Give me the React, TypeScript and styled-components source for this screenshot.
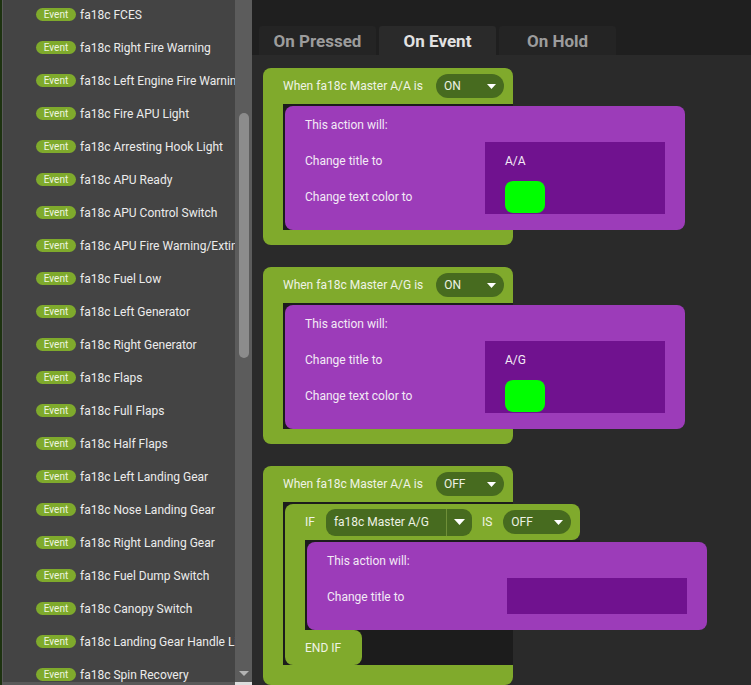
import React from "react";
import styled, { createGlobalStyle } from "styled-components";

const GlobalStyle = createGlobalStyle`
  html, body {
    margin: 0;
    padding: 0;
    background: #2a2a2a;
    overflow: hidden;
  }
  body {
    font-family: Roboto, "Liberation Sans", sans-serif;
  }
`;

const Page = styled.div`
  display: flex;
  height: 685px;
  width: 751px;
  overflow: hidden;
`;

/* ---------- sidebar ---------- */

const Sidebar = styled.aside`
  display: flex;
  width: 252px;
  flex-shrink: 0;
  height: 100%;
  background: #1d3210;
`;

const ListPanel = styled.div`
  display: flex;
  flex-direction: column;
  margin-left: 2px;
  border-left: 1px solid #5a5a5a;
  width: 232px;
  background: #444444;
  overflow: hidden;
`;

const EventList = styled.ul`
  flex: 1;
  list-style: none;
  margin: -2px 0 0 0;
  padding: 0 0 0 33px;
  overflow: hidden;
`;

const EventRow = styled.li`
  display: flex;
  align-items: center;
  gap: 4px;
  height: 33px;
  white-space: nowrap;
  font-size: 12px;
  color: #ececec;
`;

const Badge = styled.span`
  display: inline-flex;
  align-items: center;
  justify-content: center;
  flex-shrink: 0;
  width: 40px;
  height: 13px;
  border-radius: 7px;
  background: #7faa2c;
  color: #eef5e0;
  font-size: 10px;
`;

const HScroll = styled.div`
  height: 3px;
  background: #595959;
`;

const ScrollTrack = styled.div`
  display: flex;
  flex-direction: column;
  align-items: center;
  width: 17px;
  background: #5c5c5c;
  padding-top: 113px;
`;

const ScrollThumb = styled.div`
  width: 10px;
  height: 245px;
  border-radius: 5px;
  background: #8c8c8c;
`;

const ScrollArrow = styled.div`
  margin-top: auto;
  margin-bottom: 6px;
  width: 0;
  height: 0;
  border-left: 5px solid transparent;
  border-right: 5px solid transparent;
  border-top: 5px solid #b4b4b4;
`;

const ScrollCorner = styled.div`
  align-self: stretch;
  height: 3px;
  background: #dedede;
`;

/* ---------- main ---------- */

const Main = styled.main`
  flex: 1;
  display: flex;
  flex-direction: column;
  min-width: 0;
`;

const TabBar = styled.div`
  display: flex;
  gap: 3px;
  height: 55px;
  padding: 26px 0 0 7px;
  box-sizing: border-box;
  background: #1f1f1f;
`;

const Tab = styled.div<{ $active?: boolean }>`
  display: flex;
  align-items: center;
  justify-content: center;
  width: 117px;
  height: 29px;
  border-radius: 3px 3px 0 0;
  background: ${(p) => (p.$active ? "#2a2a2a" : "#242424")};
  color: ${(p) => (p.$active ? "#e2e2e2" : "#9c9c9c")};
  font-size: 17px;
  font-weight: 700;
`;

const Canvas = styled.div`
  flex: 1;
  display: flex;
  flex-direction: column;
  gap: 22px;
  padding: 13px 0 0 11px;
  background: #2a2a2a;
`;

const Block = styled.div`
  width: 250px;
  padding-bottom: 15px;
  border-radius: 8px;
  background: #80aa2c;
  color: #eff3e6;
  font-size: 12px;
`;

const BlockHeader = styled.div`
  display: flex;
  align-items: center;
  gap: 13px;
  height: 36px;
  padding-left: 20px;
  white-space: nowrap;
`;

const Slot = styled.div`
  margin-left: 20px;
  padding: 2px 0 0 2px;
  background: #1c1c1c;
`;

const Select = styled.div<{ $width: number }>`
  display: flex;
  align-items: center;
  justify-content: space-between;
  box-sizing: border-box;
  width: ${(p) => p.$width}px;
  height: 24px;
  padding: 0 8px;
  border-radius: 12px;
  background: #476b1f;
  color: #eef2e4;
  font-size: 12px;
`;

const SplitSelect = styled.div`
  display: flex;
  align-items: stretch;
  width: 146px;
  height: 27px;
  border-radius: 9px;
  background: #476b1f;
  color: #eef2e4;
  font-size: 12px;
  overflow: hidden;
`;

const SplitLabel = styled.div`
  display: flex;
  align-items: center;
  width: 112px;
  padding-left: 8px;
  border-right: 1px solid #6f8f38;
`;

const SplitButton = styled.div`
  flex: 1;
  display: flex;
  align-items: center;
  justify-content: center;
`;

const IfBlock = styled.div`
  display: flex;
  flex-direction: column;
  align-items: flex-start;
  margin-bottom: 5px;
`;

const IfHeader = styled.div`
  display: flex;
  align-items: center;
  box-sizing: border-box;
  width: 295px;
  height: 36px;
  padding-left: 20px;
  border-radius: 8px 8px 8px 0;
  background: #80aa2c;
`;

const IfMiddle = styled.div`
  display: flex;
`;

const Spine = styled.div`
  width: 20px;
  background: #80aa2c;
`;

const IfSlot = styled.div`
  width: 275px;
  box-sizing: border-box;
  padding: 2px 0 0 2px;
  background: #1c1c1c;
`;

const IfFooter = styled.div`
  display: flex;
  align-items: center;
  box-sizing: border-box;
  width: 77px;
  height: 35px;
  padding: 1px 0 0 20px;
  border-radius: 0 8px 8px 8px;
  background: #80aa2c;
`;

const Keyword = styled.span<{ $before?: number; $after?: number }>`
  margin-left: ${(p) => p.$before ?? 0}px;
  margin-right: ${(p) => p.$after ?? 0}px;
`;

const Action = styled.div`
  width: 400px;
  box-sizing: border-box;
  padding: 0 20px 16px;
  border-radius: 8px;
  background: #9c3cb9;
  color: #f3eaf6;
  font-size: 12px;
  white-space: nowrap;
`;

const ActionTitle = styled.div`
  display: flex;
  align-items: center;
  height: 36px;
  padding-top: 1px;
  box-sizing: border-box;
`;

const ActionGrid = styled.div`
  display: grid;
  grid-template-columns: 180px 180px;
`;

const Column = styled.div`
  display: flex;
  flex-direction: column;
`;

const ValueBox = styled(Column)`
  background: #70128f;
  padding-left: 20px;
`;

const Cell = styled.div`
  display: flex;
  align-items: center;
  height: 36px;
  padding-top: 1px;
  box-sizing: border-box;
`;

const Swatch = styled.div<{ $color: string }>`
  width: 40px;
  height: 32px;
  border-radius: 8px;
  background: ${(p) => p.$color};
`;

const Caret = ({ w = 9, h = 5 }: { w?: number; h?: number }) => (
  <svg width={w} height={h} viewBox={`0 0 ${w} ${h}`}>
    <polygon points={`0,0 ${w},0 ${w / 2},${h}`} fill="#ffffff" />
  </svg>
);

type Change = { label: string; title?: string; color?: string };

const ActionCard = ({ rows }: { rows: Change[] }) => (
  <Action>
    <ActionTitle>This action will:</ActionTitle>
    <ActionGrid>
      <Column>
        {rows.map((r) => (
          <Cell key={r.label}>{r.label}</Cell>
        ))}
      </Column>
      <ValueBox>
        {rows.map((r) => (
          <Cell key={r.label}>
            {r.color ? <Swatch $color={r.color} /> : r.title}
          </Cell>
        ))}
      </ValueBox>
    </ActionGrid>
  </Action>
);

const events = [
  "FCES",
  "Right Fire Warning",
  "Left Engine Fire Warning",
  "Fire APU Light",
  "Arresting Hook Light",
  "APU Ready",
  "APU Control Switch",
  "APU Fire Warning/Extinguish",
  "Fuel Low",
  "Left Generator",
  "Right Generator",
  "Flaps",
  "Full Flaps",
  "Half Flaps",
  "Left Landing Gear",
  "Nose Landing Gear",
  "Right Landing Gear",
  "Fuel Dump Switch",
  "Canopy Switch",
  "Landing Gear Handle Light",
  "Spin Recovery",
];

export default function App() {
  return (
    <>
      <GlobalStyle />
      <Page>
        <Sidebar>
          <ListPanel>
            <EventList>
              {events.map((e) => (
                <EventRow key={e}>
                  <Badge>Event</Badge>
                  fa18c {e}
                </EventRow>
              ))}
            </EventList>
            <HScroll />
          </ListPanel>
          <ScrollTrack>
            <ScrollThumb />
            <ScrollArrow />
            <ScrollCorner />
          </ScrollTrack>
        </Sidebar>

        <Main>
          <TabBar>
            <Tab>On Pressed</Tab>
            <Tab $active>On Event</Tab>
            <Tab>On Hold</Tab>
          </TabBar>

          <Canvas>
            <Block>
              <BlockHeader>
                When fa18c Master A/A is
                <Select $width={68}>
                  ON <Caret />
                </Select>
              </BlockHeader>
              <Slot>
                <ActionCard
                  rows={[
                    { label: "Change title to", title: "A/A" },
                    { label: "Change text color to", color: "#00ff00" },
                  ]}
                />
              </Slot>
            </Block>

            <Block>
              <BlockHeader>
                When fa18c Master A/G is
                <Select $width={68}>
                  ON <Caret />
                </Select>
              </BlockHeader>
              <Slot>
                <ActionCard
                  rows={[
                    { label: "Change title to", title: "A/G" },
                    { label: "Change text color to", color: "#00ff00" },
                  ]}
                />
              </Slot>
            </Block>

            <Block>
              <BlockHeader>
                When fa18c Master A/A is
                <Select $width={68}>
                  OFF <Caret />
                </Select>
              </BlockHeader>
              <Slot>
                <IfBlock>
                  <IfHeader>
                    <Keyword $after={11}>IF</Keyword>
                    <SplitSelect>
                      <SplitLabel>fa18c Master A/G</SplitLabel>
                      <SplitButton>
                        <Caret w={11} h={6} />
                      </SplitButton>
                    </SplitSelect>
                    <Keyword $before={10} $after={11}>
                      IS
                    </Keyword>
                    <Select $width={68}>
                      OFF <Caret />
                    </Select>
                  </IfHeader>
                  <IfMiddle>
                    <Spine />
                    <IfSlot>
                      <ActionCard rows={[{ label: "Change title to", title: "" }]} />
                    </IfSlot>
                  </IfMiddle>
                  <IfFooter>END IF</IfFooter>
                </IfBlock>
              </Slot>
            </Block>
          </Canvas>
        </Main>
      </Page>
    </>
  );
}
